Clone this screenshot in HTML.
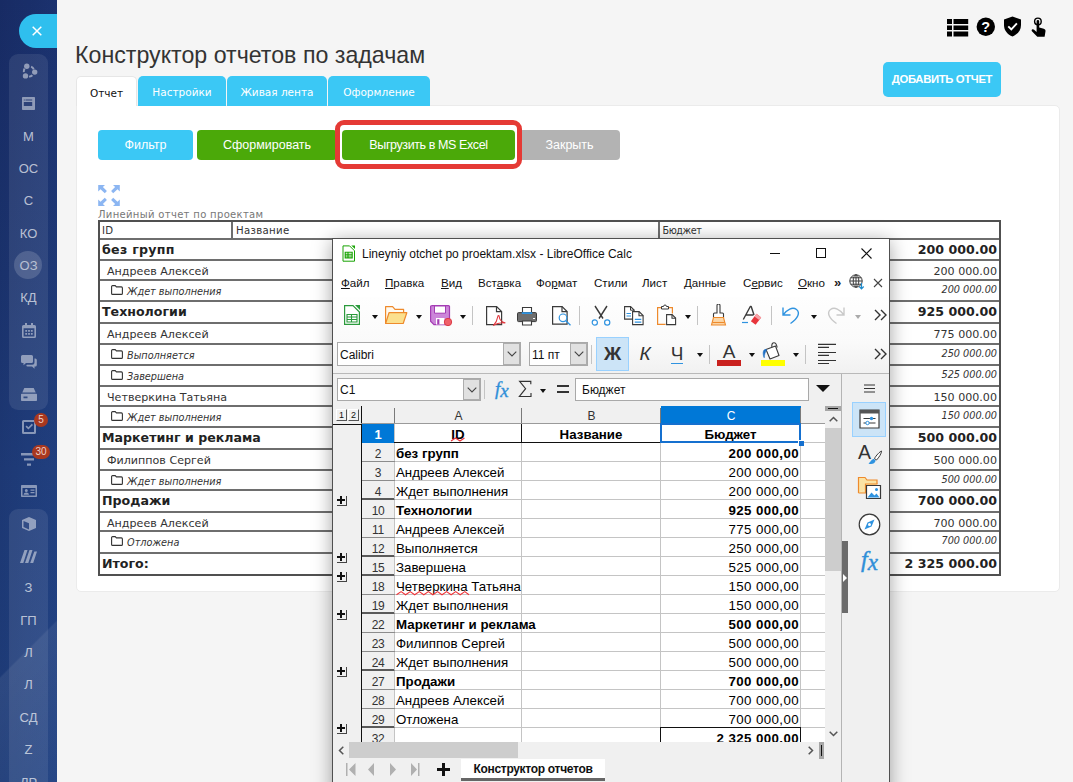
<!DOCTYPE html>
<html lang="ru">
<head>
<meta charset="utf-8">
<title>Конструктор отчетов по задачам</title>
<style>
*{box-sizing:border-box;margin:0;padding:0}
html,body{width:1073px;height:782px;overflow:hidden}
body{position:relative;background:#f5f5f5;font-family:"Liberation Sans",sans-serif;color:#333}
.abs{position:absolute}
/* ---------- sidebar ---------- */
#sb{position:absolute;left:0;top:0;width:57px;height:782px;background:linear-gradient(180deg,#192e69 0%,#1c3571 35%,#1f3c7a 60%,#20407f 100%);overflow:hidden}
#sb .shade{position:absolute;left:0;top:0;width:57px;height:782px;background:linear-gradient(90deg,rgba(0,0,30,.07) 0%,rgba(0,0,30,0) 50%,rgba(60,110,200,.06) 100%)}
#sb .streak{position:absolute;left:-40px;top:560px;width:160px;height:300px;background:linear-gradient(135deg,rgba(255,255,255,0) 0,rgba(255,255,255,0) 34%,rgba(255,255,255,.07) 34.5%,rgba(255,255,255,.02) 70%,rgba(255,255,255,0) 100%)}
#sb .grp{position:absolute;left:9px;width:39px;background:rgba(255,255,255,.085);border-radius:9px}
#sb .it{position:absolute;left:9px;width:39px;height:20px;margin-top:-10px;display:flex;align-items:center;justify-content:center;text-align:center;font-size:13px;line-height:20px;color:rgba(255,255,255,.68);letter-spacing:0}
#sb .it svg{display:block}
#sb .sel{position:absolute;left:14px;top:251px;width:28px;height:28px;border-radius:14px;background:rgba(255,255,255,.16)}
#sb .bdg{position:absolute;height:14px;border-radius:7px;background:#a9381f;color:#ecd0c8;font-size:10px;line-height:14px;text-align:center}
#xbtn{position:absolute;left:19px;top:14px;width:60px;height:34px;border-radius:17px;background:#2fbfee}
/* ---------- page ---------- */
#title{position:absolute;left:75px;top:41px;font-size:23.2px;line-height:28px;color:#333;white-space:nowrap}
.tab{position:absolute;top:76px;height:30px;border-radius:5px 5px 0 0;background:#3bc8f5;color:#fff;font-family:"DejaVu Sans","Liberation Sans",sans-serif;font-size:10.5px;line-height:32px;text-align:center;white-space:nowrap}
.tab.on{background:#fff;color:#111;border:1px solid #e6e6e6;border-bottom:none}
#panel{position:absolute;left:76px;top:105px;width:984px;height:487px;background:#fff;border:1px solid #ebebeb;border-radius:0 5px 5px 5px}
.btn{position:absolute;top:130px;height:30px;border-radius:4px;color:#fff;font-size:12.5px;line-height:31px;text-align:center;white-space:nowrap}
#add{position:absolute;left:883px;top:62px;width:118px;height:35px;border-radius:5px;background:#3bc8f5;color:#fff;font-weight:bold;font-size:11.300px;line-height:35px;text-align:center;white-space:nowrap;letter-spacing:-.35px}
#red{position:absolute;left:335px;top:120px;width:187px;height:49px;border:5px solid #e53a35;border-radius:9px}
/* report table */
#cap{position:absolute;left:98px;top:208px;font-family:"DejaVu Sans",sans-serif;font-size:10px;line-height:13px;color:#777;white-space:nowrap;letter-spacing:.33px}
#rt{position:absolute;left:98px;top:220px;width:903px;height:356px;border:2px solid #505050;font-family:"DejaVu Sans",sans-serif;overflow:hidden;background:#fff}
#rt .h{position:absolute;left:0;width:899px;font-size:9.6px;line-height:16px;color:#333;letter-spacing:.3px}
#rt .h span{position:absolute;top:1px;white-space:nowrap;transform:scaleX(1.06);transform-origin:0 50%}
#rt .h i{position:absolute;top:0;width:2px;height:16px;background:#6e6e6e}
#rt .r{position:absolute;left:0;width:899px;border-top:2px solid #6e6e6e;white-space:nowrap;color:#333}
#rt .r span{position:absolute;top:0;white-space:nowrap}
#rt .r .v{right:2px;text-align:right}
#rt .g{font-weight:bold;font-size:12.6px;line-height:19px;color:#222}
#rt .u{font-size:11.1px;line-height:21px}
#rt .s{font-size:9.7px;font-style:italic;line-height:18px}
#rt .f{position:absolute;left:11px;top:4px}
/* ---------- LibreOffice window ---------- */
#lo{position:absolute;left:0;top:0;width:1073px;height:782px;overflow:hidden}
#lo .win{position:absolute;left:332px;top:238px;width:558px;height:560px;background:#f0f0f0;border:1px solid #505050;box-shadow:0 3px 18px 0 rgba(0,0,0,.36)}
.ui{font-family:"Liberation Sans",sans-serif;font-size:11.6px;line-height:16px;color:#111;white-space:nowrap}
.mn{top:275px}
.mn u{text-decoration:underline;text-underline-offset:1px}
.dd{position:absolute;width:0;height:0;border-left:3.5px solid transparent;border-right:3.5px solid transparent;border-top:4px solid #111}
.dd.g{border-top-color:#aaa}
.sep{position:absolute;width:1px;background:#c4c4c4}
.box{background:#fff;border:1px solid #a9a9a9}
.ddb{background:#e1e1e1;border:1px solid #adadad}
.cl{font-family:"Liberation Sans",sans-serif;font-size:13.3px;line-height:21px;color:#000;white-space:nowrap;overflow:visible}
.cl.b{font-weight:bold}
.rh{left:362px;width:32px;text-align:center;font-size:12px;line-height:22px;overflow:hidden;color:#333;letter-spacing:-.3px}
.ch{top:406px;height:18px;text-align:center;font-size:12px;line-height:20px;overflow:hidden}
.ob{width:11px;height:12px;border:1px solid #fff;border-right-color:#555;border-bottom-color:#555;background:#f0f0f0;font-size:9px;line-height:10px;text-align:center;color:#111}
.pl{left:337px;width:10px;height:10px;border-right:1px solid #444;border-bottom:1px solid #444}
.pl b{position:absolute;left:0;top:3px;width:8px;height:2px;background:#111}
.pl s{position:absolute;left:3px;top:0;width:2px;height:8px;background:#111}
.wv{text-decoration:underline wavy #e02020;text-decoration-thickness:1px;text-underline-offset:0px;text-decoration-skip-ink:none}
</style>
</head>
<body>

<!-- ================= SIDEBAR ================= -->
<div id="sb">
  <div class="shade"></div><div class="streak"></div>
  <div class="grp" style="top:54px;height:356px"></div>
  <div class="grp" style="top:509px;height:290px"></div>
  <div class="sel"></div>
  <div class="it" style="top:71px"><svg width="16" height="16" viewBox="0 0 16 16" style="position:relative;left:1px"><g opacity=".48" fill="#fff"><circle cx="4.800" cy="3.300" r="2.700"/><circle cx="12.700" cy="9.100" r="2.700"/><circle cx="3.500" cy="12.900" r="2.700"/></g><circle cx="7" cy="8.400" r="5.200" fill="none" stroke="#fff" stroke-opacity=".48" stroke-width="1.900" stroke-dasharray="3.630 7.260" stroke-dashoffset="-4.310"/></svg></div>
  <div class="it" style="top:103.500px"><svg width="13" height="13" viewBox="0 0 13 13"><path fill="rgba(255,255,255,.47)" fill-rule="evenodd" d="M.8 0h11.400a.8.800 0 0 1 .8.800v11.400a.8.800 0 0 1-.8.800H.8a.8.800 0 0 1-.8-.8V.8A.8.800 0 0 1 .8 0zM1.800 5v4h8.400V5zM3.500 2.500v1h6.700v-1zM1.800 2.500v1h1v-1z"/></svg></div>
  <div class="it" style="top:136.5px">М</div>
  <div class="it" style="top:169px">ОС</div>
  <div class="it" style="top:201px">С</div>
  <div class="it" style="top:233.5px">КО</div>
  <div class="it" style="top:265.5px;color:rgba(255,255,255,.6)">ОЗ</div>
  <div class="it" style="top:298px">КД</div>
  <div class="it" style="top:330px"><svg width="14" height="15" viewBox="0 0 14 15"><path fill="rgba(255,255,255,.47)" d="M3 0h2v2h4V0h2v2h1.500A1.500 1.500 0 0 1 14 3.500v10a1.500 1.500 0 0 1-1.500 1.500h-11A1.500 1.500 0 0 1 0 13.500v-10A1.500 1.500 0 0 1 1.500 2H3zM1.600 5.200v8.200h10.800V5.200zM3.300 7h1.800v1.700H3.300zm2.800 0h1.800v1.700H6.100zm2.800 0h1.800v1.700H8.900zM3.300 10h1.800v1.700H3.300zm2.800 0h1.800v1.700H6.100zm2.800 0h1.800v1.700H8.900z"/></svg></div>
  <div class="it" style="top:362px"><svg width="16" height="14" viewBox="0 0 16 14"><path fill="rgba(255,255,255,.47)" d="M1.500 0h9A1.500 1.500 0 0 1 12 1.500v5A1.500 1.500 0 0 1 10.500 8H5L2.500 10.300V8h-1A1.500 1.500 0 0 1 0 6.500v-5A1.500 1.500 0 0 1 1.500 0zM13.500 3.500h.8A1.500 1.500 0 0 1 15.800 5v5a1.500 1.500 0 0 1-1.500 1.500h-.8v2.300L11 11.500H6.500A1.500 1.500 0 0 1 5.200 10.700l.8-.9h5A2.500 2.500 0 0 0 13.500 7.300z"/></svg></div>
  <div class="it" style="top:394.5px"><svg width="16" height="13" viewBox="0 0 16 13"><path fill="rgba(255,255,255,.47)" d="M3.300 0h9.400l2 4.500H1.300zM.8 5.800h14.400a.8.800 0 0 1 .8.800v5.600a.8.800 0 0 1-.8.800H.8a.8.800 0 0 1-.8-.8V6.600a.8.800 0 0 1 .8-.8zM2.500 8.500v1.700h4V8.500z"/></svg></div>
  <div class="it" style="top:427px"><svg width="14" height="14" viewBox="0 0 14 14"><path fill="rgba(255,255,255,.47)" d="M1.500 0h11A1.500 1.500 0 0 1 14 1.500v11a1.500 1.500 0 0 1-1.500 1.500h-11A1.500 1.500 0 0 1 0 12.500v-11A1.500 1.500 0 0 1 1.500 0zM2 2v10h10V2zM3.500 6.700l1.200-1.200 1.700 1.700 3.400-3.500 1.200 1.200-4.600 4.700z"/></svg></div>
  <div class="it" style="top:459px"><svg width="16" height="13" viewBox="0 0 16 13"><path fill="rgba(255,255,255,.47)" d="M0 0h16v2.400H0zM3 5.200h10v2.400H3zM6 10.400h4v2.400H6z"/></svg></div>
  <div class="it" style="top:491px"><svg width="16" height="12" viewBox="0 0 16 12"><path fill="rgba(255,255,255,.47)" d="M.8 0h14.400a.8.800 0 0 1 .8.800v10.400a.8.800 0 0 1-.8.800H.8a.8.800 0 0 1-.8-.8V.8A.8.800 0 0 1 .8 0zM1.500 3v7.500h13V3zM5.300 4a1.500 1.500 0 1 1 0 3 1.500 1.500 0 0 1 0-3zM2.600 9.700c.2-1.400 1.200-2.200 2.700-2.200s2.500.8 2.700 2.200zM9.500 4.500h4v1.200h-4zM9.500 7h4v1.200h-4z"/></svg></div>
  <div class="it" style="top:523.5px"><svg width="14" height="14" viewBox="0 0 14 14"><path fill="rgba(255,255,255,.47)" d="M7 0l7 3v8l-7 3-7-3V3zM7 6.200L1.500 3.900v6.200L7 12.400z" fill-rule="evenodd"/></svg></div>
  <div class="it" style="top:556px"><svg width="17" height="13" viewBox="0 0 17 13"><path fill="rgba(255,255,255,.47)" d="M4.500 0h3L3.300 13H0zM9.500 0h3L8.300 13H5zM14.300 1.500h2.700L13.200 13h-3z"/></svg></div>
  <div class="it" style="top:588px">З</div>
  <div class="it" style="top:620.5px">ГП</div>
  <div class="it" style="top:653px">Л</div>
  <div class="it" style="top:685px">Л</div>
  <div class="it" style="top:717.5px">СД</div>
  <div class="it" style="top:750px">Z</div>
  <div class="it" style="top:783px">ЛР</div>
  <div id="xbtn"><svg class="abs" style="left:13px;top:12px" width="10" height="10" viewBox="0 0 10 10"><path d="M.7.700l8.600 8.600M9.300.700L.7 9.300" stroke="#fff" stroke-width="1.500" fill="none"/></svg></div>
  <div class="bdg" style="left:34px;top:413px;width:14px">5</div>
  <div class="bdg" style="left:32px;top:445px;width:18px">30</div>
</div>

<!-- ================= PAGE ================= -->
<div id="title">Конструктор отчетов по задачам</div>

<svg class="abs" style="left:947px;top:18.500px" width="22" height="18" viewBox="0 0 22 18"><path fill="#000" d="M0 0h5v5H0zM6.500 0h14.700v5H6.500zM0 6.500h5v4.500H0zM6.500 6.500h14.700v4.500H6.500zM0 12.500h5v5H0zM6.500 12.500h14.700v5H6.500z"/></svg>
<svg class="abs" style="left:976px;top:17px" width="20" height="20" viewBox="0 0 20 20"><circle cx="9.800" cy="9.800" r="9.200" fill="#000"/><text x="9.800" y="15" text-anchor="middle" font-family="Liberation Sans, sans-serif" font-weight="bold" font-size="14.500" fill="#fff">?</text></svg>
<svg class="abs" style="left:1003px;top:16px" width="19" height="21" viewBox="0 0 19 21"><path fill="#000" d="M9.500.600L18 3.600v5.300c0 5.600-3.500 9.500-8.500 11.500C4.500 18.400 1 14.500 1 8.900V3.600z"/><path d="M5.300 10.300l3 3 5.600-6" fill="none" stroke="#fff" stroke-width="1.900"/></svg>
<svg class="abs" style="left:1031px;top:17px" width="16" height="21" viewBox="0 0 16 21"><circle cx="6.900" cy="4.400" r="3.300" fill="none" stroke="#000" stroke-width="1.400"/><path fill="#000" d="M5.600 4.200a1.300 1.300 0 0 1 2.600 0v6.300l4.600 1.200c1.300.4 1.900 1.300 1.700 2.600l-.9 5.500H6.300L.9 14.200c-.6-.7-.2-1.700.7-1.900.6-.1 1.100.1 1.500.5l2.500 2.300z"/></svg>
<div id="add">ДОБАВИТЬ ОТЧЕТ</div>

<div id="panel"></div>
<div class="tab on" style="left:76px;width:61px">Отчет</div>
<div class="tab" style="left:138px;width:88px">Настройки</div>
<div class="tab" style="left:227px;width:100px">Живая лента</div>
<div class="tab" style="left:328px;width:102px">Оформление</div>

<div class="btn" style="left:98px;width:95px;background:#3bc8f5">Фильтр</div>
<div class="btn" style="left:197px;width:140px;background:#4ba909">Сформировать</div>
<div class="btn" style="left:342px;width:173px;background:#4ba909;letter-spacing:-.4px">Выгрузить в MS Excel</div>
<div class="btn" style="left:519px;width:101px;background:#b3b3b3">Закрыть</div>
<div id="red"></div>

<svg class="abs" style="left:98px;top:185px" width="22" height="21" viewBox="0 0 21.600 21"><g fill="#8cb6f2"><path d="M0 0h6.800L4.700 2.100 8.700 6.100 6.600 8.200 2.300 4.300 0 6.600z"/><path d="M21.600 0h-6.800l2.100 2.100-4 4 2.100 2.100 4.300-3.900 2.300 2.300z"/><path d="M0 21h6.800l-2.100-2.100 4-4-2.100-2.100-4.300 3.900L0 14.400z"/><path d="M21.600 21h-6.800l2.100-2.100-4-4 2.100-2.100 4.300 3.900 2.300-2.300z"/></g></svg>
<div id="cap">Линейный отчет по проектам</div>

<!--RTB-->
<div id="rt">
<div class="h" style="top:0;height:16px"><span style="left:2px">ID</span><i style="left:131px"></i><span style="left:135.500px">Название</span><i style="left:558px"></i><span style="left:562.500px;transform:none;letter-spacing:-.4px">Бюджет</span></div>
<div class="r g" style="top:16px;height:21px"><span class="t" style="left:2px;letter-spacing:.28px">без групп</span><span class="v">200 000.00</span></div>
<div class="r u" style="top:37px;height:20px"><span class="t" style="left:7px">Андреев Алексей</span><span class="v">200 000.00</span></div>
<div class="r s" style="top:57px;height:21px"><svg class="f" width="12" height="10" viewBox="0 0 12 10"><path d="M.6 1.600a1 1 0 0 1 1-1h2.600l1.200 1.300h5a1 1 0 0 1 1 1v5.500a1 1 0 0 1-1 1H1.600a1 1 0 0 1-1-1z" fill="none" stroke="#333" stroke-width="1.100"/></svg><span class="t" style="left:27px;top:2px">Ждет выполнения</span><span class="v">200 000.00</span></div>
<div class="r g" style="top:78px;height:22px"><span class="t" style="left:2px">Технологии</span><span class="v">925 000.00</span></div>
<div class="r u" style="top:100px;height:21px"><span class="t" style="left:7px">Андреев Алексей</span><span class="v">775 000.00</span></div>
<div class="r s" style="top:121px;height:21px"><svg class="f" width="12" height="10" viewBox="0 0 12 10"><path d="M.6 1.600a1 1 0 0 1 1-1h2.600l1.200 1.300h5a1 1 0 0 1 1 1v5.500a1 1 0 0 1-1 1H1.600a1 1 0 0 1-1-1z" fill="none" stroke="#333" stroke-width="1.100"/></svg><span class="t" style="left:27px;top:2px">Выполняется</span><span class="v">250 000.00</span></div>
<div class="r s" style="top:142px;height:21px"><svg class="f" width="12" height="10" viewBox="0 0 12 10"><path d="M.6 1.600a1 1 0 0 1 1-1h2.600l1.200 1.300h5a1 1 0 0 1 1 1v5.500a1 1 0 0 1-1 1H1.600a1 1 0 0 1-1-1z" fill="none" stroke="#333" stroke-width="1.100"/></svg><span class="t" style="left:27px;top:2px">Завершена</span><span class="v">525 000.00</span></div>
<div class="r u" style="top:163px;height:20px"><span class="t" style="left:7px">Четверкина Татьяна</span><span class="v">150 000.00</span></div>
<div class="r s" style="top:183px;height:21px"><svg class="f" width="12" height="10" viewBox="0 0 12 10"><path d="M.6 1.600a1 1 0 0 1 1-1h2.600l1.200 1.300h5a1 1 0 0 1 1 1v5.500a1 1 0 0 1-1 1H1.600a1 1 0 0 1-1-1z" fill="none" stroke="#333" stroke-width="1.100"/></svg><span class="t" style="left:27px;top:2px">Ждет выполнения</span><span class="v">150 000.00</span></div>
<div class="r g" style="top:204px;height:22px"><span class="t" style="left:2px">Маркетинг и реклама</span><span class="v">500 000.00</span></div>
<div class="r u" style="top:226px;height:21px"><span class="t" style="left:7px">Филиппов Сергей</span><span class="v">500 000.00</span></div>
<div class="r s" style="top:247px;height:20px"><svg class="f" width="12" height="10" viewBox="0 0 12 10"><path d="M.6 1.600a1 1 0 0 1 1-1h2.600l1.200 1.300h5a1 1 0 0 1 1 1v5.500a1 1 0 0 1-1 1H1.600a1 1 0 0 1-1-1z" fill="none" stroke="#333" stroke-width="1.100"/></svg><span class="t" style="left:27px;top:2px">Ждет выполнения</span><span class="v">500 000.00</span></div>
<div class="r g" style="top:267px;height:22px"><span class="t" style="left:2px">Продажи</span><span class="v">700 000.00</span></div>
<div class="r u" style="top:289px;height:19px"><span class="t" style="left:7px">Андреев Алексей</span><span class="v">700 000.00</span></div>
<div class="r s" style="top:308px;height:22px"><svg class="f" width="12" height="10" viewBox="0 0 12 10"><path d="M.6 1.600a1 1 0 0 1 1-1h2.600l1.200 1.300h5a1 1 0 0 1 1 1v5.500a1 1 0 0 1-1 1H1.600a1 1 0 0 1-1-1z" fill="none" stroke="#333" stroke-width="1.100"/></svg><span class="t" style="left:27px;top:2px">Отложена</span><span class="v">700 000.00</span></div>
<div class="r g" style="top:330px;height:22px"><span class="t" style="left:2px">Итого:</span><span class="v">2 325 000.00</span></div>
</div>
<!--RTE-->
<!--LOB-->
<div id="lo">
<div class="win"></div>
<!-- title bar -->
<div class="abs" style="left:333px;top:239px;width:556px;height:29px;background:#fff"></div>
<svg class="abs" style="left:342px;top:244.500px" width="14" height="17" viewBox="0 0 14 17"><path d="M1 .900h6.600l4.900 4.900v10.400H1z" fill="#fff" stroke="#18a303" stroke-width="1"/><path d="M9.300.400h3.700v3.700z" fill="#18a303"/><path d="M3.200 7.300h7v5.600h-7zM3.200 9.200h7M3.200 11h7M6 7.300v5.600" fill="none" stroke="#18a303" stroke-width="1.100"/></svg>
<div class="ui abs" id="wtitle" style="left:362px;top:246px;font-size:12px">Lineyniy otchet po proektam.xlsx - LibreOffice Calc</div>
<div class="abs" style="left:770px;top:253px;width:10px;height:1px;background:#111"></div>
<div class="abs" style="left:816px;top:248px;width:10px;height:10px;border:1px solid #111"></div>
<svg class="abs" style="left:861px;top:248px" width="11" height="11" viewBox="0 0 11 11"><path d="M.5.500l10 10M10.500.500l-10 10" stroke="#111" stroke-width="1.100" fill="none"/></svg>
<!-- menu bar -->
<div class="abs" style="left:333px;top:268px;width:556px;height:29px;background:#fff"></div>
<div class="ui mn abs" style="left:341px"><u>Ф</u>айл</div>
<div class="ui mn abs" style="left:385px"><u>П</u>равка</div>
<div class="ui mn abs" style="left:441px"><u>В</u>ид</div>
<div class="ui mn abs" style="left:478px">Вст<u>а</u>вка</div>
<div class="ui mn abs" style="left:536px">Фо<u>р</u>мат</div>
<div class="ui mn abs" style="left:594px">Стили</div>
<div class="ui mn abs" style="left:642px">Лист</div>
<div class="ui mn abs" style="left:684px"><u>Д</u>анные</div>
<div class="ui mn abs" style="left:743px">С<u>е</u>рвис</div>
<div class="ui mn abs" style="left:798px"><u>О</u>кно</div>
<div class="abs" style="left:834px;top:274px;font-size:13px;line-height:18px;font-weight:bold;color:#222">»</div>
<svg class="abs" style="left:849px;top:274px" width="16" height="16" viewBox="0 0 16 16"><g fill="none" stroke="#3a3a3a" stroke-width="1"><circle cx="7" cy="7" r="6.200"/><ellipse cx="7" cy="7" rx="2.800" ry="6.200"/><path d="M.8 7h12.400M1.700 3.800h10.600M1.700 10.200h10.600M7 .8v12.400"/></g><path d="M12.500 9v5.500M10.300 12.500l2.200 2.300 2.200-2.300" fill="none" stroke="#1e8bcd" stroke-width="1.200"/></svg>
<svg class="abs" style="left:873px;top:278px" width="10" height="10" viewBox="0 0 10 10"><path d="M1 1l8 8M9 1l-8 8" stroke="#444" stroke-width="1.100" fill="none"/></svg>
<!-- toolbars bg -->
<div class="abs" style="left:333px;top:297px;width:556px;height:76px;background:linear-gradient(#fefefe,#fafafa 60%,#f1f1f1)"></div>
<div class="abs" style="left:333px;top:373px;width:556px;height:1px;background:#b9b9b9"></div>
<!--TB1B-->
<!-- toolbar 1 -->
<svg class="abs" style="left:343px;top:304px" width="18" height="22" viewBox="0 0 18 22"><path d="M1.600 1.600h8.400l6.400 6.400v12.400H1.600z" fill="#fff" stroke="#2b9a3c" stroke-width="1.200"/><path d="M12 .900h5v5z" fill="#2b9a3c"/><path d="M4 10.500h10v7.500H4zM4 13h10M4 15.500h10M8.500 10.500v7.500" fill="none" stroke="#2b9a3c" stroke-width="1.100"/></svg>
<i class="dd" style="left:372px;top:315px"></i>
<svg class="abs" style="left:384px;top:305px" width="24" height="20" viewBox="0 0 24 20"><path d="M1.600 18.500V1.600h7l2.400 2.800h8.600v3.300" fill="#fffaf0" stroke="#ee8a2c" stroke-width="1.200" stroke-linejoin="round"/><path d="M1.600 18.500l3.400-10.800h17.800l-3.600 10.800z" fill="#fbe08e" stroke="#ee8a2c" stroke-width="1.200" stroke-linejoin="round"/></svg>
<i class="dd" style="left:416px;top:315px"></i>
<svg class="abs" style="left:429px;top:304px" width="24" height="23" viewBox="0 0 24 23"><path d="M2.500 1.600h17a1 1 0 0 1 1 1v17a1 1 0 0 1-1 1H5L1.600 17.200V2.600a1 1 0 0 1 1-1z" fill="#cc86d9" stroke="#a43cb4" stroke-width="1.200"/><path d="M5.500 2h11v7.200h-11z" fill="#fff" stroke="#a43cb4" stroke-width="1"/><path d="M7 14h8.500v6.500H7z" fill="#fff"/><path d="M8.200 15.200h2.200v5.300H8.200z" fill="#a43cb4"/><circle cx="19" cy="18" r="3.700" fill="#f0606a" stroke="#d8343e" stroke-width=".9"/></svg>
<i class="dd" style="left:460px;top:315px"></i>
<i class="sep" style="left:472px;top:306px;height:19px"></i>
<svg class="abs" style="left:485px;top:304px" width="22" height="22" viewBox="0 0 22 22"><path d="M1.600 2.600h10l5 5v13H1.600z" fill="#fff" stroke="#3a3a3a" stroke-width="1.200"/><path d="M11.500 2.600v5.100h5.100" fill="none" stroke="#3a3a3a" stroke-width="1.200"/><path d="M8.500 21.300c2-2 3.800-5.500 4.300-8.800.2-1.200 1.300-1.200 1.400 0 .3 3.200 2 5.300 5.800 6.400-3.800-.6-8 .2-11.500 2.400z" fill="none" stroke="#e2383f" stroke-width="1.100" stroke-linejoin="round"/></svg>
<svg class="abs" style="left:516px;top:306px" width="22" height="20" viewBox="0 0 22 20"><path d="M6.500 1.500h9v6h-9z" fill="#fff" stroke="#3a3a3a" stroke-width="1.100"/><path d="M2.500 6.600h17a1 1 0 0 1 1 1v7a1 1 0 0 1-1 1h-17a1 1 0 0 1-1-1v-7a1 1 0 0 1 1-1z" fill="#6e6e6e" stroke="#3a3a3a" stroke-width="1"/><path d="M5.800 6.200h10.400v1.800H5.800z" fill="#2f93e0"/><path d="M17 12h2v1h-2z" fill="#fff"/><path d="M6.500 15h9v4h-9z" fill="#fff" stroke="#3a3a3a" stroke-width="1.100"/></svg>
<svg class="abs" style="left:551px;top:305px" width="21" height="21" viewBox="0 0 21 21"><path d="M1.600 1.600h9.500l5 5v12.500H1.600z" fill="#fff" stroke="#3a3a3a" stroke-width="1.200"/><path d="M11 1.600v5.100h5.100" fill="none" stroke="#3a3a3a" stroke-width="1.200"/><circle cx="12" cy="12.800" r="3.800" fill="#fff" stroke="#2f93e0" stroke-width="1.200"/><path d="M14.800 15.800l4.700 4.400" stroke="#2f93e0" stroke-width="1.300" fill="none"/></svg>
<i class="sep" style="left:579px;top:306px;height:19px"></i>
<svg class="abs" style="left:591px;top:305px" width="20" height="21" viewBox="0 0 20 21"><path d="M4 1l8 12.500M16 1L8 13.500" fill="none" stroke="#3a3a3a" stroke-width="1.400"/><circle cx="3.800" cy="17.500" r="2.600" fill="#fff" stroke="#2f93e0" stroke-width="1.200"/><circle cx="16.200" cy="17.500" r="2.600" fill="#fff" stroke="#2f93e0" stroke-width="1.200"/></svg>
<svg class="abs" style="left:623px;top:305px" width="22" height="21" viewBox="0 0 22 21"><path d="M1.600 1.600h6l3.500 3.500v9H1.600z" fill="#fff" stroke="#3a3a3a" stroke-width="1.100"/><path d="M7.500 1.600v3.600h3.600" fill="none" stroke="#3a3a3a" stroke-width="1"/><path d="M3.500 8.500h4.500M3.500 11h4.500" stroke="#2f93e0" stroke-width="1.100"/><path d="M9.600 6.600h6.500l4 4v9H9.600z" fill="#fff" stroke="#3a3a3a" stroke-width="1.100"/><path d="M16 6.600v4.200h4.200" fill="none" stroke="#3a3a3a" stroke-width="1.100"/><path d="M11.800 14.300h6.500M11.800 17.200h6.500" stroke="#2f93e0" stroke-width="1.200"/></svg>
<svg class="abs" style="left:656px;top:304px" width="21" height="22" viewBox="0 0 21 22"><path d="M5.500 3.600H1.600v16.800h8" fill="none" stroke="#ee8a2c" stroke-width="1.200"/><path d="M12.500 3.600h3.900v6" fill="none" stroke="#ee8a2c" stroke-width="1.200"/><path d="M5.500 5V2.500h2a1.500 1.500 0 0 1 3 0h2V5z" fill="#fff" stroke="#3a3a3a" stroke-width="1"/><path d="M10.600 10.600h5.500l3.500 3.500v6.500h-9z" fill="#fff" stroke="#3a3a3a" stroke-width="1.100"/><path d="M16 10.600v3.700h3.600" fill="none" stroke="#3a3a3a" stroke-width="1.100"/></svg>
<i class="dd" style="left:685px;top:315px"></i>
<i class="sep" style="left:697px;top:306px;height:19px"></i>
<svg class="abs" style="left:710px;top:304px" width="17" height="22" viewBox="0 0 17 22"><path d="M7 1.500a1.500 1.500 0 0 1 3 0V9h2.500a1 1 0 0 1 1 1v3.500h-10V10a1 1 0 0 1 1-1H7z" fill="#fff" stroke="#3a3a3a" stroke-width="1.100"/><path d="M3.500 13.500h10l2 7.500h-14z" fill="#fbd7a8" stroke="#ee8a2c" stroke-width="1.100"/><path d="M2.500 18.500h12" stroke="#ee8a2c" stroke-width="1.100"/></svg>
<svg class="abs" style="left:741px;top:305px" width="21" height="21" viewBox="0 0 21 21"><path d="M2.300 14.500L9.300 1.500h.9L13 10M5 10h7.500" fill="none" stroke="#3a3a3a" stroke-width="1.400" stroke-linejoin="round"/><path d="M1 17.500h6" stroke="#2f93e0" stroke-width="1.200"/><path d="M15.500 8.800l4.700 3.600-5.600 7.400-4.700-3.600z" fill="#e8353c"/><path d="M15.500 8.800l4.700 3.600-2 2.700-4.700-3.600z" fill="#f6a3a8"/></svg>
<i class="sep" style="left:771px;top:306px;height:19px"></i>
<svg class="abs" style="left:781px;top:305px" width="20" height="20" viewBox="0 0 20 20"><path d="M2 2.500V10h7.500M2 10C6 4.500 11.500 1.500 15.500 4.500c4 3.200 1.500 9-6 14" fill="none" stroke="#2f93e0" stroke-width="1.400"/></svg>
<i class="dd" style="left:811px;top:315px"></i>
<svg class="abs" style="left:826px;top:305px" width="20" height="20" viewBox="0 0 20 20"><path d="M18 2.500V10h-7.500M18 10C14 4.500 8.500 1.500 4.500 4.500c-4 3.200-1.500 9 6 14" fill="none" stroke="#c9c9c9" stroke-width="1.400"/></svg>
<i class="dd g" style="left:855px;top:315px"></i>
<svg class="abs" style="left:874px;top:309px" width="13" height="12" viewBox="0 0 13 12"><path d="M1 1l5 5-5 5M7 1l5 5-5 5" fill="none" stroke="#333" stroke-width="1.400"/></svg>
<!--TB1E-->
<!--TB2B-->
<!-- toolbar 2 -->
<div class="abs box" style="left:337px;top:342px;width:184px;height:24px"></div>
<div class="abs ddb" style="left:503px;top:343px;width:17px;height:22px"></div>
<svg class="abs" style="left:507px;top:351px" width="10" height="6" viewBox="0 0 10 6"><path d="M.7.700L5 5l4.300-4.300" fill="none" stroke="#444" stroke-width="1.100"/></svg>
<div class="ui abs" style="left:340px;top:347px;font-size:12px">Calibri</div>
<div class="abs box" style="left:529px;top:342px;width:59px;height:24px"></div>
<div class="abs ddb" style="left:570px;top:343px;width:17px;height:22px"></div>
<svg class="abs" style="left:574px;top:351px" width="10" height="6" viewBox="0 0 10 6"><path d="M.7.700L5 5l4.300-4.300" fill="none" stroke="#444" stroke-width="1.100"/></svg>
<div class="ui abs" style="left:532px;top:347px;font-size:12px">11 пт</div>
<i class="sep" style="left:591px;top:345px;height:19px"></i>
<div class="abs" style="left:596px;top:337px;width:33px;height:34px;background:#cce4f7;border:1px solid #99d1ff"></div>
<div class="abs" style="left:596px;top:343px;width:33px;text-align:center;font-size:19px;line-height:22px;font-weight:bold;color:#333">Ж</div>
<div class="abs" style="left:630px;top:343px;width:30px;text-align:center;font-size:19px;line-height:22px;font-style:italic;color:#333">К</div>
<div class="abs" style="left:662px;top:343px;width:30px;text-align:center;font-size:19px;line-height:22px;color:#333">Ч</div>
<div class="abs" style="left:671px;top:363px;width:12px;height:1px;background:#2f93e0"></div>
<i class="dd" style="left:697px;top:353px"></i>
<i class="sep" style="left:709px;top:345px;height:19px"></i>
<div class="abs" style="left:717px;top:341px;width:24px;text-align:center;font-size:19px;line-height:22px;color:#333">А</div>
<div class="abs" style="left:717px;top:360px;width:24px;height:6px;background:#c9211e"></div>
<i class="dd" style="left:749px;top:353px"></i>
<svg class="abs" style="left:761px;top:342px" width="24" height="18" viewBox="0 0 24 18"><path d="M5 7.500L14.500 4l3.500 9.500L9 17z" fill="#fff" stroke="#3a3a3a" stroke-width="1.100" stroke-linejoin="round"/><path d="M11 5.300c-.8-3 .6-4.600 2-4.600s2.600 1.600 3.200 4.800" fill="none" stroke="#3a3a3a" stroke-width="1.100"/><path d="M5.200 7.300c-2.500 0-3.200 2-3 4.500.1 1.500.3 2.700 1 4 .2-3 .8-5.500 2.300-7.500z" fill="#1e6fc4" stroke="#1e6fc4" stroke-width=".6"/></svg>
<div class="abs" style="left:761px;top:360px;width:24px;height:6px;background:#ffff00"></div>
<i class="dd" style="left:793px;top:353px"></i>
<i class="sep" style="left:805px;top:345px;height:19px"></i>
<svg class="abs" style="left:818px;top:343px" width="19" height="22" viewBox="0 0 19 22"><path d="M0 1.400h18M0 4.400h11M0 9.500h18M0 12.400h11M0 17.500h18M0 20.500h11" stroke="#333" stroke-width="1.100" fill="none"/></svg>
<svg class="abs" style="left:874px;top:348px" width="13" height="12" viewBox="0 0 13 12"><path d="M1 1l5 5-5 5M7 1l5 5-5 5" fill="none" stroke="#333" stroke-width="1.400"/></svg>
<!-- formula bar -->
<div class="abs box" style="left:337px;top:378px;width:144px;height:23px"></div>
<div class="abs ddb" style="left:463px;top:379px;width:17px;height:21px"></div>
<svg class="abs" style="left:467px;top:387px" width="10" height="6" viewBox="0 0 10 6"><path d="M.7.700L5 5l4.300-4.300" fill="none" stroke="#444" stroke-width="1.100"/></svg>
<div class="ui abs" style="left:340px;top:382px;font-size:12px">C1</div>
<i class="sep" style="left:484px;top:380px;height:19px"></i>
<div class="abs" style="left:495px;top:378px;font-family:'Liberation Serif','DejaVu Serif',serif;font-style:italic;font-size:19px;line-height:22px;color:#2f8fd8;-webkit-text-stroke:.35px #2f8fd8;white-space:nowrap"><span>f</span><span style="font-size:19px;position:relative;left:0px;top:2px">x</span></div>
<svg class="abs" style="left:518px;top:380px" width="14" height="18" viewBox="0 0 14 18"><path d="M12.800 4.300V1.300H1.600l6 7.400-6.200 7.800h11.600v-3.400" fill="none" stroke="#333" stroke-width="1.150" stroke-linejoin="miter"/></svg>
<i class="dd" style="left:540px;top:389px"></i>
<div class="abs" style="left:557px;top:385px;width:12px;height:2px;background:#333"></div>
<div class="abs" style="left:557px;top:391px;width:12px;height:2.300px;background:#333"></div>
<div class="abs box" style="left:575px;top:378px;width:234px;height:23px"></div>
<div class="ui abs" style="left:582px;top:382px;font-size:12px">Бюджет</div>
<div class="abs" style="left:816px;top:385px;width:0;height:0;border-left:7px solid transparent;border-right:7px solid transparent;border-top:7px solid #111"></div>
<!-- sidebar strip -->
<div class="abs" style="left:841px;top:374px;width:1px;height:408px;background:#b4b4b4"></div>
<svg class="abs" style="left:864px;top:384px" width="11" height="9" viewBox="0 0 11 9"><path d="M0 1h11M0 4.500h11M0 8h11" stroke="#333" stroke-width="1.100"/></svg>
<div class="abs" style="left:852px;top:402px;width:34px;height:35px;background:#cce4f7;border:1px solid #99d1ff"></div>
<svg class="abs" style="left:859px;top:409px" width="21" height="20" viewBox="0 0 21 20"><path d="M1 1h19v18H1z" fill="#fff" stroke="#3a3a3a" stroke-width="1.200"/><path d="M1 1h19v3.500H1z" fill="#555"/><path d="M4.500 9.500h12M4.500 14h12" stroke="#3a3a3a" stroke-width="1.100"/><circle cx="12.500" cy="9.500" r="1.700" fill="#2f93e0"/><circle cx="8.500" cy="14" r="1.700" fill="#fff" stroke="#2f93e0" stroke-width="1"/></svg>
<div class="abs" style="left:858px;top:439px;font-size:19.500px;line-height:26px;color:#333">А</div>
<svg class="abs" style="left:867px;top:450px" width="16" height="16" viewBox="0 0 16 16"><path d="M14.500 1c-1.500.5-5.500 4.500-7 7.500l2 1.500c2.500-2.500 5-6.500 5-9z" fill="#fff" stroke="#3a3a3a" stroke-width="1"/><path d="M7 9c-2.500 0-3 2.500-5.500 4.500 2.500 1.200 6.500.5 7.200-3z" fill="#2f93e0"/></svg>
<svg class="abs" style="left:857px;top:476px" width="25" height="24" viewBox="0 0 25 24"><path d="M1.500 17V1.500h6.500l2 2.500h10V8" fill="#fbe3a4" stroke="#ee8a2c" stroke-width="1.200"/><path d="M1.500 17h7V8h12" fill="#fbe3a4" stroke="#ee8a2c" stroke-width="1.200"/><path d="M9.500 9.500h14v13h-14z" fill="#fff" stroke="#3a3a3a" stroke-width="1.200"/><path d="M10.500 21.500l4-5 3 3 2-2 3 4z" fill="#2f93e0"/><circle cx="19.500" cy="13.500" r="1.500" fill="#2f93e0"/></svg>
<svg class="abs" style="left:858px;top:513px" width="23" height="23" viewBox="0 0 23 23"><circle cx="11.500" cy="11.500" r="10.300" fill="#fff" stroke="#3a3a3a" stroke-width="1.200"/><path d="M16.500 6.500l-3 7-7 3 3-7z" fill="#2f93e0"/><circle cx="11.500" cy="11.500" r="1.500" fill="#fff"/></svg>
<div class="abs" style="left:861px;top:544px;font-family:'Liberation Serif','DejaVu Serif',serif;font-style:italic;font-size:24px;line-height:30px;color:#2f8fd8;-webkit-text-stroke:.4px #2f8fd8;white-space:nowrap"><span>f</span><span style="font-size:23px;position:relative;left:0;top:3px">x</span></div>
<div class="abs" style="left:842px;top:541px;width:6px;height:72px;background:#6b6b6b"></div>
<div class="abs" style="left:843px;top:574px;width:0;height:0;border-top:4px solid transparent;border-bottom:4px solid transparent;border-left:4px solid #fff"></div>
<!--TB2E-->
<!--FB-->
<!--GRIDB-->
<div class="abs" style="left:333px;top:406px;width:492px;height:336px;background:#fff"></div>
<div class="abs" style="left:333px;top:406px;width:28px;height:336px;background:#f0f0f0"></div>
<div class="abs" style="left:361px;top:406px;width:464px;height:18px;background:#f0f0f0"></div>
<div class="abs" style="left:361px;top:424px;width:34px;height:318px;background:#f0f0f0"></div>
<div class="ob abs" style="left:336px;top:409px">1</div><div class="ob abs" style="left:348px;top:409px">2</div>
<div class="abs" style="left:361px;top:406px;width:1px;height:336px;background:#111"></div>
<div class="abs" style="left:333px;top:424px;width:28px;height:1px;background:#111"></div>
<div class="abs" style="left:661px;top:406px;width:140px;height:18px;background:#0078d7"></div>
<div class="ch abs" style="left:395px;width:127px;color:#333">A</div>
<div class="ch abs" style="left:522px;width:139px;color:#333">B</div>
<div class="ch abs" style="left:661px;width:140px;color:#fff">C</div>
<div class="abs" style="left:394px;top:408px;width:1px;height:16px;background:#7a7a7a"></div>
<div class="abs" style="left:521px;top:408px;width:1px;height:16px;background:#7a7a7a"></div>
<div class="abs" style="left:660px;top:408px;width:1px;height:16px;background:#7a7a7a"></div>
<div class="abs" style="left:800px;top:408px;width:1px;height:16px;background:#7a7a7a"></div>
<div class="abs" style="left:361px;top:423px;width:464px;height:1px;background:#9a9a9a"></div>
<div class="abs" style="left:394px;top:424px;width:1px;height:318px;background:#c4c4c4"></div>
<div class="abs" style="left:521px;top:424px;width:1px;height:318px;background:#c4c4c4"></div>
<div class="abs" style="left:660px;top:424px;width:1px;height:318px;background:#c4c4c4"></div>
<div class="abs" style="left:800px;top:424px;width:1px;height:318px;background:#c4c4c4"></div>
<div class="abs" style="left:395px;top:442px;width:430px;height:1px;background:#c4c4c4"></div>
<div class="abs" style="left:362px;top:442px;width:33px;height:1px;background:#8c8c8c"></div>
<div class="abs" style="left:362px;top:424px;width:32px;height:19px;background:#0078d7"></div>
<div class="rh abs" style="top:424px;height:19px;color:#fff;font-weight:bold;font-size:13px">1</div>
<div class="cl b abs" style="left:395px;top:424px;width:126px;height:19px;text-align:center">ID</div>
<div class="cl b abs" style="left:522px;top:424px;width:138px;height:19px;text-align:center">Название</div>
<div class="cl b abs" style="left:661px;top:424px;width:139px;height:19px;text-align:center">Бюджет</div>
<div class="abs" style="left:395px;top:461px;width:430px;height:1px;background:#c4c4c4"></div>
<div class="abs" style="left:362px;top:461px;width:33px;height:1px;background:#8c8c8c"></div>
<div class="rh abs" style="top:443px;height:19px">2</div>
<div class="cl b abs" style="left:396px;top:443px;height:19px">без групп</div>
<div class="cl b abs" style="left:661px;top:443px;width:138px;height:19px;text-align:right;letter-spacing:.4px">200 000,00</div>
<div class="abs" style="left:395px;top:480px;width:430px;height:1px;background:#c4c4c4"></div>
<div class="abs" style="left:362px;top:480px;width:33px;height:1px;background:#8c8c8c"></div>
<div class="rh abs" style="top:462px;height:19px">3</div>
<div class="cl abs" style="left:396px;top:462px;height:19px">Андреев Алексей</div>
<div class="cl abs" style="left:661px;top:462px;width:138px;height:19px;text-align:right;letter-spacing:.4px">200 000,00</div>
<div class="abs" style="left:395px;top:499px;width:430px;height:1px;background:#c4c4c4"></div>
<div class="abs" style="left:362px;top:499px;width:33px;height:1px;background:#8c8c8c"></div>
<div class="rh abs" style="top:481px;height:19px">4</div>
<div class="cl abs" style="left:396px;top:481px;height:19px">Ждет выполнения</div>
<div class="cl abs" style="left:661px;top:481px;width:138px;height:19px;text-align:right;letter-spacing:.4px">200 000,00</div>
<div class="abs" style="left:395px;top:518px;width:430px;height:1px;background:#c4c4c4"></div>
<div class="abs" style="left:362px;top:518px;width:33px;height:1px;background:#8c8c8c"></div>
<div class="rh abs" style="top:500px;height:19px">10</div>
<div class="cl b abs" style="left:396px;top:500px;height:19px">Технологии</div>
<div class="cl b abs" style="left:661px;top:500px;width:138px;height:19px;text-align:right;letter-spacing:.4px">925 000,00</div>
<div class="abs" style="left:395px;top:537px;width:430px;height:1px;background:#c4c4c4"></div>
<div class="abs" style="left:362px;top:537px;width:33px;height:1px;background:#8c8c8c"></div>
<div class="rh abs" style="top:519px;height:19px">11</div>
<div class="cl abs" style="left:396px;top:519px;height:19px">Андреев Алексей</div>
<div class="cl abs" style="left:661px;top:519px;width:138px;height:19px;text-align:right;letter-spacing:.4px">775 000,00</div>
<div class="abs" style="left:395px;top:556px;width:430px;height:1px;background:#c4c4c4"></div>
<div class="abs" style="left:362px;top:556px;width:33px;height:1px;background:#8c8c8c"></div>
<div class="rh abs" style="top:538px;height:19px">12</div>
<div class="cl abs" style="left:396px;top:538px;height:19px">Выполняется</div>
<div class="cl abs" style="left:661px;top:538px;width:138px;height:19px;text-align:right;letter-spacing:.4px">250 000,00</div>
<div class="abs" style="left:395px;top:575px;width:430px;height:1px;background:#c4c4c4"></div>
<div class="abs" style="left:362px;top:575px;width:33px;height:1px;background:#8c8c8c"></div>
<div class="rh abs" style="top:557px;height:19px">15</div>
<div class="cl abs" style="left:396px;top:557px;height:19px">Завершена</div>
<div class="cl abs" style="left:661px;top:557px;width:138px;height:19px;text-align:right;letter-spacing:.4px">525 000,00</div>
<div class="abs" style="left:395px;top:594px;width:430px;height:1px;background:#c4c4c4"></div>
<div class="abs" style="left:362px;top:594px;width:33px;height:1px;background:#8c8c8c"></div>
<div class="rh abs" style="top:576px;height:19px">18</div>
<div class="cl abs" style="left:396px;top:576px;height:19px">Четверкина Татьяна</div>
<div class="cl abs" style="left:661px;top:576px;width:138px;height:19px;text-align:right;letter-spacing:.4px">150 000,00</div>
<div class="abs" style="left:395px;top:613px;width:430px;height:1px;background:#c4c4c4"></div>
<div class="abs" style="left:362px;top:613px;width:33px;height:1px;background:#8c8c8c"></div>
<div class="rh abs" style="top:595px;height:19px">19</div>
<div class="cl abs" style="left:396px;top:595px;height:19px">Ждет выполнения</div>
<div class="cl abs" style="left:661px;top:595px;width:138px;height:19px;text-align:right;letter-spacing:.4px">150 000,00</div>
<div class="abs" style="left:395px;top:632px;width:430px;height:1px;background:#c4c4c4"></div>
<div class="abs" style="left:362px;top:632px;width:33px;height:1px;background:#8c8c8c"></div>
<div class="rh abs" style="top:614px;height:19px">22</div>
<div class="cl b abs" style="left:396px;top:614px;height:19px">Маркетинг и реклама</div>
<div class="cl b abs" style="left:661px;top:614px;width:138px;height:19px;text-align:right;letter-spacing:.4px">500 000,00</div>
<div class="abs" style="left:395px;top:651px;width:430px;height:1px;background:#c4c4c4"></div>
<div class="abs" style="left:362px;top:651px;width:33px;height:1px;background:#8c8c8c"></div>
<div class="rh abs" style="top:633px;height:19px">23</div>
<div class="cl abs" style="left:396px;top:633px;height:19px">Филиппов Сергей</div>
<div class="cl abs" style="left:661px;top:633px;width:138px;height:19px;text-align:right;letter-spacing:.4px">500 000,00</div>
<div class="abs" style="left:395px;top:670px;width:430px;height:1px;background:#c4c4c4"></div>
<div class="abs" style="left:362px;top:670px;width:33px;height:1px;background:#8c8c8c"></div>
<div class="rh abs" style="top:652px;height:19px">24</div>
<div class="cl abs" style="left:396px;top:652px;height:19px">Ждет выполнения</div>
<div class="cl abs" style="left:661px;top:652px;width:138px;height:19px;text-align:right;letter-spacing:.4px">500 000,00</div>
<div class="abs" style="left:395px;top:689px;width:430px;height:1px;background:#c4c4c4"></div>
<div class="abs" style="left:362px;top:689px;width:33px;height:1px;background:#8c8c8c"></div>
<div class="rh abs" style="top:671px;height:19px">27</div>
<div class="cl b abs" style="left:396px;top:671px;height:19px">Продажи</div>
<div class="cl b abs" style="left:661px;top:671px;width:138px;height:19px;text-align:right;letter-spacing:.4px">700 000,00</div>
<div class="abs" style="left:395px;top:708px;width:430px;height:1px;background:#c4c4c4"></div>
<div class="abs" style="left:362px;top:708px;width:33px;height:1px;background:#8c8c8c"></div>
<div class="rh abs" style="top:690px;height:19px">28</div>
<div class="cl abs" style="left:396px;top:690px;height:19px">Андреев Алексей</div>
<div class="cl abs" style="left:661px;top:690px;width:138px;height:19px;text-align:right;letter-spacing:.4px">700 000,00</div>
<div class="abs" style="left:395px;top:727px;width:430px;height:1px;background:#c4c4c4"></div>
<div class="abs" style="left:362px;top:727px;width:33px;height:1px;background:#8c8c8c"></div>
<div class="rh abs" style="top:709px;height:19px">29</div>
<div class="cl abs" style="left:396px;top:709px;height:19px">Отложена</div>
<div class="cl abs" style="left:661px;top:709px;width:138px;height:19px;text-align:right;letter-spacing:.4px">700 000,00</div>
<div class="rh abs" style="top:728px;height:14px">32</div>
<div class="cl b abs" style="left:661px;top:728px;width:138px;height:14px;text-align:right;letter-spacing:.4px">2 325 000,00</div>
<svg class="abs" style="left:0;top:0" width="1073" height="782"><path d="M451.0 441.0L455.5 438.0L460.0 441.0L464.5 438.0" fill="none" stroke="#ee3338" stroke-width="1.15" stroke-linejoin="round"/></svg>
<svg class="abs" style="left:0;top:0" width="1073" height="782"><path d="M396.5 594.8L401.1 591.6L405.6 594.8L410.2 591.6L414.7 594.8L419.3 591.6L423.8 594.8L428.4 591.6L432.9 594.8L437.5 591.6L442.0 594.8L446.6 591.6L451.1 594.8L455.7 591.6L460.2 594.8L464.8 591.6L469.0 594.8" fill="none" stroke="#ee3338" stroke-width="1.15" stroke-linejoin="round"/></svg>
<div class="abs" style="left:394px;top:442px;width:407px;height:1px;background:#111"></div>
<div class="abs" style="left:521px;top:424px;width:1px;height:19px;background:#111"></div>
<div class="abs" style="left:660px;top:727px;width:141px;height:20px;border:1px solid #111;border-bottom:none"></div>
<div class="abs" style="left:660px;top:423px;width:141px;height:20px;border:2px solid #1570cf"></div>
<div class="abs" style="left:798px;top:440px;width:6px;height:6px;background:#1570cf;border:1px solid #fff;border-right:none;border-bottom:none"></div>
<div class="pl abs" style="top:496px"><b></b><s></s></div>
<div class="abs" style="left:362px;top:498px;width:32px;height:2px;background:#5a5a5a"></div>
<div class="pl abs" style="top:553px"><b></b><s></s></div>
<div class="abs" style="left:362px;top:555px;width:32px;height:2px;background:#5a5a5a"></div>
<div class="pl abs" style="top:572px"><b></b><s></s></div>
<div class="abs" style="left:362px;top:574px;width:32px;height:2px;background:#5a5a5a"></div>
<div class="pl abs" style="top:610px"><b></b><s></s></div>
<div class="abs" style="left:362px;top:612px;width:32px;height:2px;background:#5a5a5a"></div>
<div class="pl abs" style="top:667px"><b></b><s></s></div>
<div class="abs" style="left:362px;top:669px;width:32px;height:2px;background:#5a5a5a"></div>
<div class="pl abs" style="top:724px"><b></b><s></s></div>
<div class="abs" style="left:362px;top:726px;width:32px;height:2px;background:#5a5a5a"></div>
<div class="abs" style="left:825px;top:406px;width:16px;height:336px;background:#f0f0f0"></div>
<div class="abs" style="left:825px;top:406px;width:16px;height:5px;background:#a6a6a6"></div><div class="abs" style="left:828px;top:408px;width:10px;height:1px;background:#111"></div>
<svg class="abs" style="left:829px;top:416px" width="9" height="6" viewBox="0 0 9 6"><path d="M.7 5.300L4.500 1.500l3.800 3.800" fill="none" stroke="#555" stroke-width="1.500"/></svg>
<div class="abs" style="left:825px;top:428px;width:16px;height:143px;background:#cdcdcd"></div>
<svg class="abs" style="left:829px;top:731px" width="9" height="6" viewBox="0 0 9 6"><path d="M.7.700L4.500 4.500 8.300.700" fill="none" stroke="#555" stroke-width="1.500"/></svg>
<div class="abs" style="left:333px;top:742px;width:508px;height:40px;background:#f0f0f0"></div>
<svg class="abs" style="left:338px;top:746px" width="6" height="9" viewBox="0 0 6 9"><path d="M5.300.700L1.500 4.500l3.800 3.800" fill="none" stroke="#555" stroke-width="1.500"/></svg>
<div class="abs" style="left:349px;top:742px;width:169px;height:16px;background:#cdcdcd"></div>
<svg class="abs" style="left:808px;top:746px" width="6" height="9" viewBox="0 0 6 9"><path d="M.7.700L4.500 4.500.7 8.300" fill="none" stroke="#555" stroke-width="1.500"/></svg>
<div class="abs" style="left:819px;top:742px;width:5px;height:17px;background:#a6a6a6"></div><div class="abs" style="left:821px;top:745px;width:1px;height:11px;background:#111"></div>
<svg class="abs" style="left:346px;top:763px" width="74" height="13" viewBox="0 0 74 13"><g fill="#b0b0b0"><path d="M0 0h1.500v13H0zM9.500 0v13L3 6.500zM28 0v13l-6-6.500zM44 0v13l6-6.500zM65 0v13l6-6.500zM72 0h1.500v13H72z"/></g></svg>
<div class="abs" style="left:437px;top:768px;width:13px;height:3px;background:#111"></div><div class="abs" style="left:442px;top:763px;width:3px;height:13px;background:#111"></div>
<div class="abs" style="left:461px;top:759px;width:144px;height:19px;background:#fff"></div><div class="abs" style="left:461px;top:778px;width:144px;height:3px;background:#666"></div>
<div class="abs" id="shtab" style="left:461px;top:761px;width:144px;text-align:center;font-size:12px;line-height:16px;font-weight:bold;color:#111;letter-spacing:-.3px;white-space:nowrap">Конструктор отчетов</div>
<!--GRIDE-->
</div>
<!--LOE-->

</body>
</html>
